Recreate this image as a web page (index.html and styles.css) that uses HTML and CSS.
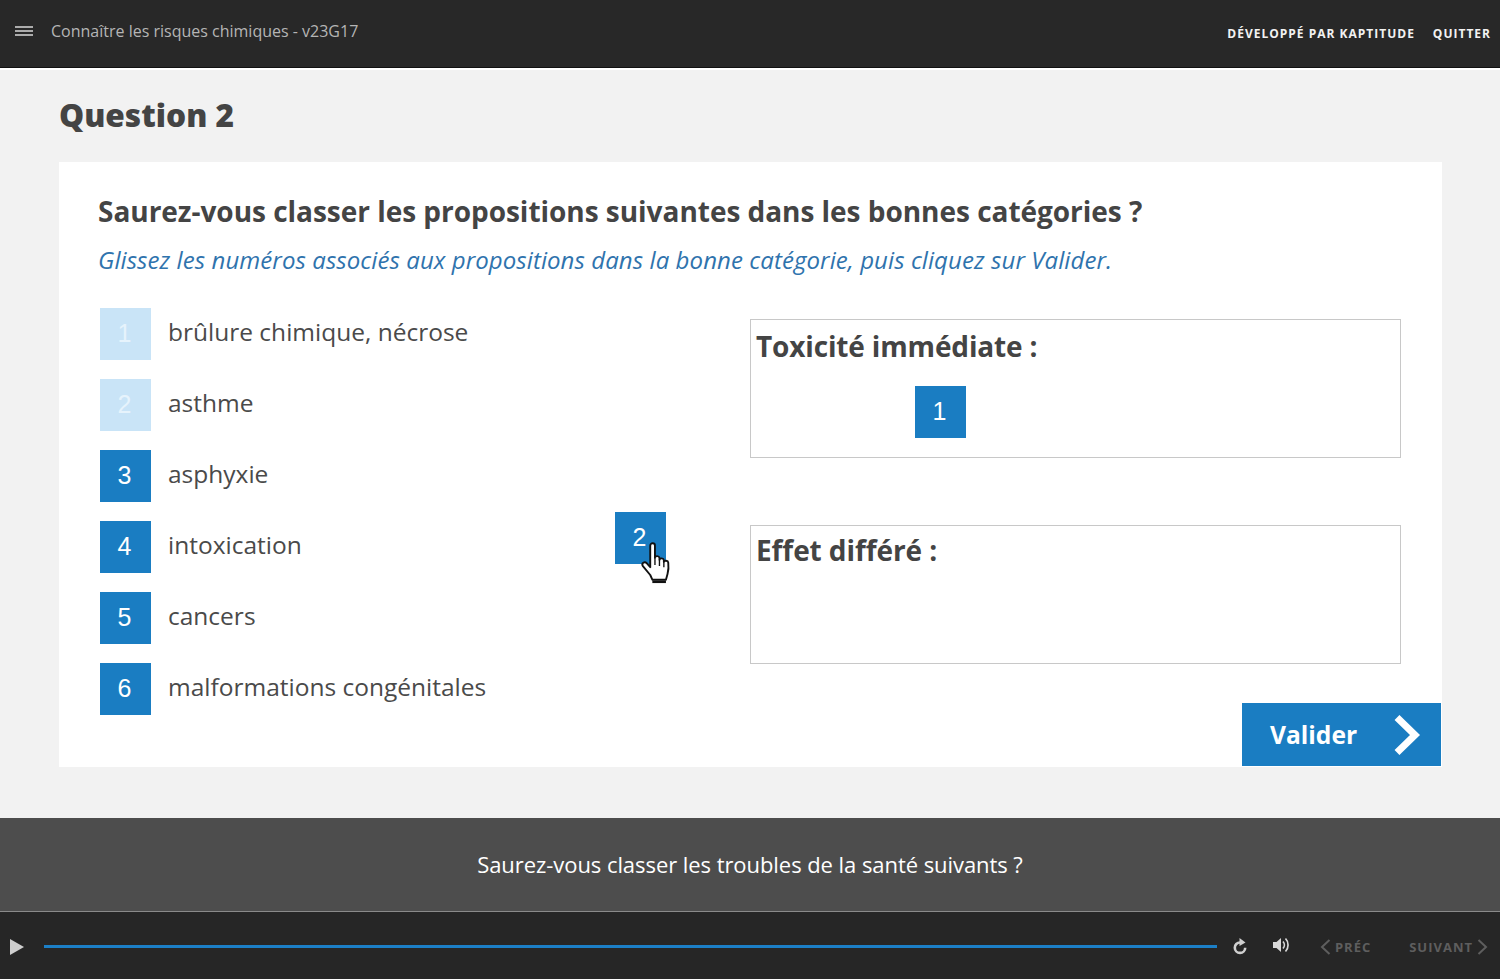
FILE: index.html
```html
<!DOCTYPE html>
<html lang="fr">
<head>
<meta charset="utf-8">
<title>Connaître les risques chimiques</title>
<link rel="stylesheet" href="styles.css">
</head>
<body>
<header class="topbar">
  <div class="topbar-left">
    <svg class="menu-icon" width="18" height="10" viewBox="0 0 18 10"><path d="M0 1h18M0 5h18M0 9h18" stroke="#d8d8d8" stroke-width="1.6"/></svg>
    <span class="course-title">Connaître les risques chimiques - v23G17</span>
  </div>
  <nav class="topbar-right">
    <span>DÉVELOPPÉ PAR KAPTITUDE</span>
    <span>QUITTER</span>
  </nav>
</header>
<main class="main">
  <h1 class="page-title">Question 2</h1>
  <section class="card">
    <h2 class="question">Saurez-vous classer les propositions suivantes dans les bonnes catégories ?</h2>
    <p class="instruction">Glissez les numéros associés aux propositions dans la bonne catégorie, puis cliquez sur Valider.</p>
    <div class="exercise">
      <ul class="items">
        <li class="item"><span class="num num-used">1</span><span class="label">brûlure chimique, nécrose</span></li>
        <li class="item"><span class="num num-used">2</span><span class="label">asthme</span></li>
        <li class="item"><span class="num">3</span><span class="label">asphyxie</span></li>
        <li class="item"><span class="num">4</span><span class="label">intoxication</span></li>
        <li class="item"><span class="num">5</span><span class="label">cancers</span></li>
        <li class="item"><span class="num">6</span><span class="label">malformations congénitales</span></li>
      </ul>
      <div class="zones">
        <div class="zone">Toxicité immédiate :<span class="num placed">1</span></div>
        <div class="zone zone-second">Effet différé :</div>
      </div>
      <div class="drag">
        <span class="num">2</span>
        <svg class="hand" width="32" height="44" viewBox="0 0 30 42">
          <path d="M9.500 3.500c0-3 4.500-3 4.500 0V15c.3-2 4-2 4.300.2V17c.3-1.900 4-1.800 4.200.3V19c.4-1.700 4-1.500 4.200.6.4 3.600.3 7.400-.7 10.900L24.500 36H11.500L9.500 31.500 2.500 23c-1.800-2.500 1.500-4.800 3.600-2.800L9.500 24z" fill="#fff" stroke="#111" stroke-width="1.800" stroke-linejoin="round"/>
          <path d="M11.500 38h13" stroke="#111" stroke-width="2.400"/>
          <path d="M14 15v7M18.300 17v6M22.500 19v5" stroke="#111" stroke-width="1.300"/>
        </svg>
      </div>
    </div>
    <button class="validate" type="button">
      Valider
      <svg width="30" height="40" viewBox="0 0 30 40"><path d="M5 2.500l18 17.500L5 37.500" fill="none" stroke="#fff" stroke-width="7"/></svg>
    </button>
  </section>
</main>
<section class="caption">Saurez-vous classer les troubles de la santé suivants ?</section>
<footer class="player">
  <svg class="play" width="15" height="16" viewBox="0 0 15 16"><path d="M1 0l14 8-14 8z" fill="#cfcfcf"/></svg>
  <div class="progress"></div>
  <svg class="ctrl-replay" width="16" height="18" viewBox="0 0 16 18"><path d="M8 4.500a5.200 5.200 0 1 0 5.200 5.200" fill="none" stroke="#cfcfcf" stroke-width="2.600"/><path d="M7.500 0l6 4.500-6 3.500z" fill="#cfcfcf"/></svg>
  <svg class="ctrl-sound" width="18" height="16" viewBox="0 0 18 16"><path d="M0 5h3.500L8 1v14l-4.500-4H0z" fill="#d8d8d8"/><path d="M10 4.500c1.800 2 1.800 5 0 7M12.500 1.500c3.400 3.400 3.400 9.600 0 13" fill="none" stroke="#d8d8d8" stroke-width="1.700"/></svg>
  <div class="nav-link prev">
    <svg width="11" height="16" viewBox="0 0 11 16"><path d="M9.500 1L2 8l7.500 7" fill="none" stroke="#5e5e5e" stroke-width="2"/></svg>
    <span>PRÉC</span>
  </div>
  <div class="nav-link next">
    <span>SUIVANT</span>
    <svg width="11" height="16" viewBox="0 0 11 16"><path d="M1.500 1L9 8l-7.500 7" fill="none" stroke="#5e5e5e" stroke-width="2"/></svg>
  </div>
</footer>
</body>
</html>
```
FILE: styles.css
```css
* { box-sizing: border-box; }
html, body { margin: 0; padding: 0; }
body {
  width: 1500px;
  height: 979px;
  overflow: hidden;
  font-family: "Open Sans", sans-serif;
  color: #444;
  background: #f2f2f2;
  display: flex;
  flex-direction: column;
}
.topbar {
  height: 68px;
  background: #282828;
  border-bottom: 1px solid #111;
  display: flex;
  justify-content: space-between;
  align-items: center;
  padding: 0 9px 6px 15px;
  flex: none;
}
.topbar-left { display: flex; align-items: center; gap: 18px; }
.course-title { font-size: 16px; color: #b5b5b5; }
.topbar-right {
  display: flex;
  gap: 18px;
  font-size: 12px;
  font-weight: 700;
  color: #f2f2f2;
  letter-spacing: 1px;
  padding-top: 5px;
}
.main {
  height: 750px;
  flex: none;
  padding: 0 58px 0 59px;
  border-top: 2px solid #fff;
}
.page-title {
  margin: 0;
  height: 92px;
  padding-top: 23px;
  font-size: 31.600px;
  line-height: 44px;
  font-weight: 800;
  color: #444;
}
.card {
  position: relative;
  height: 605px;
  background: #fff;
  padding: 28px 39px 0;
}
.question {
  margin: 0;
  font-size: 28px;
  line-height: 42px;
  font-weight: 700;
  color: #444;
  letter-spacing: -0.03px;
}
.instruction {
  margin: 10px 0 0;
  font-size: 24px;
  line-height: 36px;
  font-style: italic;
  color: #2f73ad;
  letter-spacing: 0.08px;
}
.exercise {
  position: relative;
  display: flex;
  justify-content: space-between;
  margin-top: 30px;
}
.items {
  list-style: none;
  margin: 0;
  padding: 0 0 0 2px;
  display: flex;
  flex-direction: column;
  gap: 19px;
}
.item { display: flex; align-items: center; gap: 17px; height: 52px; }
.label { font-size: 24.500px; line-height: 32px; color: #4a4a4a; margin-top: -4px; }
.num {
  width: 51px;
  height: 52px;
  flex: none;
  display: flex;
  align-items: center;
  justify-content: center;
  padding: 0 2px 2px 0;
  background: #1a7dc2;
  color: #fff;
  font-family: "Liberation Sans", sans-serif;
  font-size: 25px;
}
.num-used { background: #c9e4f7; color: #e6f3fc; }
.zones {
  display: flex;
  flex-direction: column;
  gap: 67px;
  padding-top: 11px;
  margin-right: 2px;
}
.zone {
  position: relative;
  width: 651px;
  height: 139px;
  border: 1px solid #c8c8c8;
  padding: 5px;
  font-size: 28px;
  line-height: 42px;
  font-weight: 700;
  color: #444;
  letter-spacing: -0.15px;
}
.zone-second { padding-top: 3px; letter-spacing: -0.08px; }
.placed {
  position: absolute;
  left: 164px;
  top: 66px;
  font-weight: 400;
  line-height: 1;
}
.drag {
  position: absolute;
  left: 517px;
  top: 204px;
  width: 51px;
  height: 52px;
}
.hand { position: absolute; left: 25px; top: 30px; }
.validate {
  position: absolute;
  left: 1183px;
  top: 541px;
  width: 199px;
  height: 63px;
  border: 0;
  background: #1a7dc2;
  color: #fff;
  font-family: inherit;
  font-size: 24.600px;
  font-weight: 700;
  display: flex;
  align-items: center;
  justify-content: space-between;
  padding: 0 19px 0 28px;
}
.caption {
  height: 93px;
  flex: none;
  background: #4d4d4d;
  color: #fff;
  font-size: 22px;
  display: flex;
  align-items: center;
  justify-content: center;
  letter-spacing: -0.06px;
  padding-bottom: 2px;
}
.player {
  flex: 1;
  background: #262626;
  border-top: 1px solid #8a8a8a;
  display: flex;
  align-items: center;
  padding: 2px 12px 0 9px;
}
.play { flex: none; }
.progress {
  width: 1173px;
  height: 3px;
  margin-left: 20px;
  background: #1c7fc6;
}
.ctrl-replay { margin-left: 15px; flex: none; }
.ctrl-sound { margin-left: 25px; flex: none; margin-top: -3px; }
.nav-link {
  display: flex;
  align-items: center;
  gap: 4px;
  font-size: 13px;
  font-weight: 700;
  color: #5e5e5e;
  letter-spacing: 1px;
}
.prev { margin-left: 29px; }
.next { margin-left: 38px; }
```
